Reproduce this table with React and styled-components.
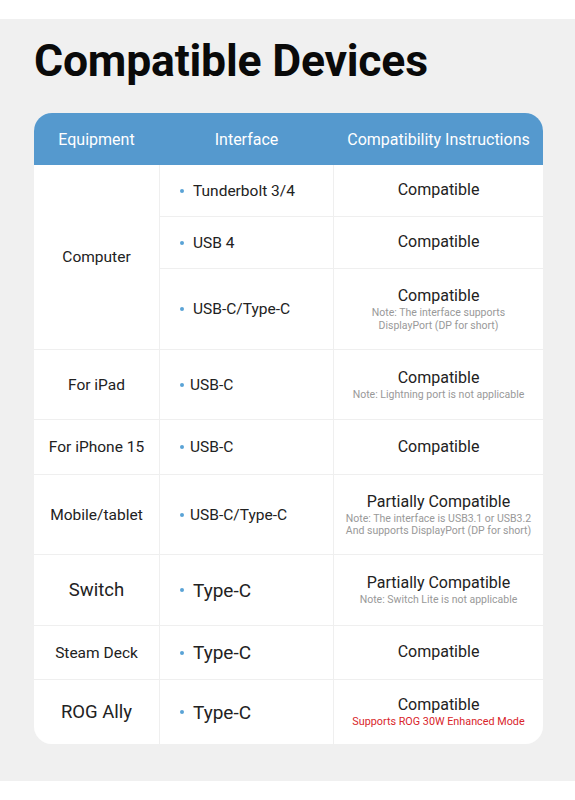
import React from "react"
import styled, { createGlobalStyle } from "styled-components"

const GlobalStyle = createGlobalStyle`
  body {
    margin: 0;
    background: #ffffff;
    font-family: Roboto, "Noto Sans", sans-serif;
  }
`

const groups = [
  {
    device: "Computer",
    items: [
      { port: "Tunderbolt 3/4", status: "Compatible", h: 51 },
      { port: "USB 4", status: "Compatible", h: 51 },
      {
        port: "USB-C/Type-C",
        status: "Compatible",
        note: ["Note: The interface supports", "DisplayPort (DP for short)"],
        h: 80,
      },
    ],
  },
  {
    device: "For iPad",
    items: [
      {
        port: "USB-C",
        status: "Compatible",
        note: ["Note: Lightning port is not applicable"],
        h: 69,
        tight: true,
      },
    ],
  },
  {
    device: "For iPhone 15",
    items: [{ port: "USB-C", status: "Compatible", h: 54, tight: true }],
  },
  {
    device: "Mobile/tablet",
    items: [
      {
        port: "USB-C/Type-C",
        status: "Partially Compatible",
        note: [
          "Note: The interface is USB3.1 or USB3.2",
          "And supports DisplayPort (DP for short)",
        ],
        h: 79,
        tight: true,
      },
    ],
  },
  {
    device: "Switch",
    big: true,
    items: [
      {
        port: "Type-C",
        status: "Partially Compatible",
        note: ["Note: Switch Lite is not applicable"],
        h: 70,
        big: true,
      },
    ],
  },
  {
    device: "Steam Deck",
    items: [{ port: "Type-C", status: "Compatible", h: 53, big: true }],
  },
  {
    device: "ROG Ally",
    big: true,
    items: [
      {
        port: "Type-C",
        status: "Compatible",
        note: ["Supports ROG 30W Enhanced Mode"],
        red: true,
        h: 64,
        big: true,
      },
    ],
  },
]

const App = () => {
  const rowHeights = groups.flatMap(g => g.items.map(i => `${i.h}px`)).join(" ")

  return (
    <>
      <GlobalStyle />
      <TopStrip />
      <Panel>
        <Title>Compatible Devices</Title>
        <Table>
          <HeaderRow>
            <HeaderCell>Equipment</HeaderCell>
            <HeaderCell>Interface</HeaderCell>
            <HeaderCell>Compatibility Instructions</HeaderCell>
          </HeaderRow>
          <Body style={{ gridTemplateRows: rowHeights }}>
            {groups.map(g => (
              <React.Fragment key={g.device}>
                <DeviceCell $span={g.items.length} $big={g.big}>
                  {g.device}
                </DeviceCell>
                {g.items.map(item => (
                  <React.Fragment key={g.device + item.port}>
                    <PortCell $big={item.big} $tight={item.tight}>
                      <Dot />
                      {item.port}
                    </PortCell>
                    <StatusCell>
                      <Status>{item.status}</Status>
                      {item.note &&
                        item.note.map(line => (
                          <Note key={line} $red={item.red}>
                            {line}
                          </Note>
                        ))}
                    </StatusCell>
                  </React.Fragment>
                ))}
              </React.Fragment>
            ))}
          </Body>
        </Table>
      </Panel>
    </>
  )
}

const TopStrip = styled.div`
  height: 19px;
  background: #ffffff;
`

const Panel = styled.div`
  background: #f0f0f0;
  height: 762px;
  padding: 0 32px 0 34px;
  box-sizing: border-box;
  display: flex;
  flex-direction: column;
`

const Title = styled.h1`
  margin: 15px 0 0;
  font-size: 44.5px;
  line-height: 54px;
  font-weight: 700;
  color: #0a0a0a;
  letter-spacing: -0.2px;
`

const Table = styled.div`
  margin-top: 25px;
  width: 509px;
  border-radius: 18px;
  overflow: hidden;
  background: #ffffff;
`

const HeaderRow = styled.div`
  display: grid;
  grid-template-columns: 125px 175px 209px;
  height: 52px;
  background: #5599ce;
  align-items: center;
`

const HeaderCell = styled.div`
  color: #ffffff;
  font-size: 16px;
  text-align: center;
  white-space: nowrap;
`

const Body = styled.div`
  display: grid;
  grid-template-columns: 125px 173px 209px;
  gap: 1px;
  background: #efefef;
`

const Cell = styled.div`
  background: #ffffff;
  display: flex;
  align-items: center;
  color: #222222;
`

const DeviceCell = styled(Cell)`
  grid-column: 1;
  grid-row: span ${p => p.$span};
  justify-content: center;
  font-size: ${p => (p.$big ? "18.5px" : "15.5px")};
  white-space: nowrap;
`

const PortCell = styled(Cell)`
  grid-column: 2;
  padding-left: 20px;
  gap: ${p => (p.$tight ? "6px" : "9px")};
  font-size: ${p => (p.$big ? "19px" : "15.5px")};
`

const Dot = styled.span`
  width: 4px;
  height: 4px;
  border-radius: 50%;
  background: #5aa3d6;
  flex: none;
`

const StatusCell = styled(Cell)`
  grid-column: 3;
  flex-direction: column;
  justify-content: center;
  text-align: center;
`

const Status = styled.div`
  font-size: 16px;
  line-height: 20px;
  margin-bottom: 1px;
`

const Note = styled.div`
  font-size: ${p => (p.$red ? "10.8px" : "10.5px")};
  line-height: 12.5px;
  white-space: nowrap;
  color: ${p => (p.$red ? "#d9252b" : "#999999")};
`

export default App
